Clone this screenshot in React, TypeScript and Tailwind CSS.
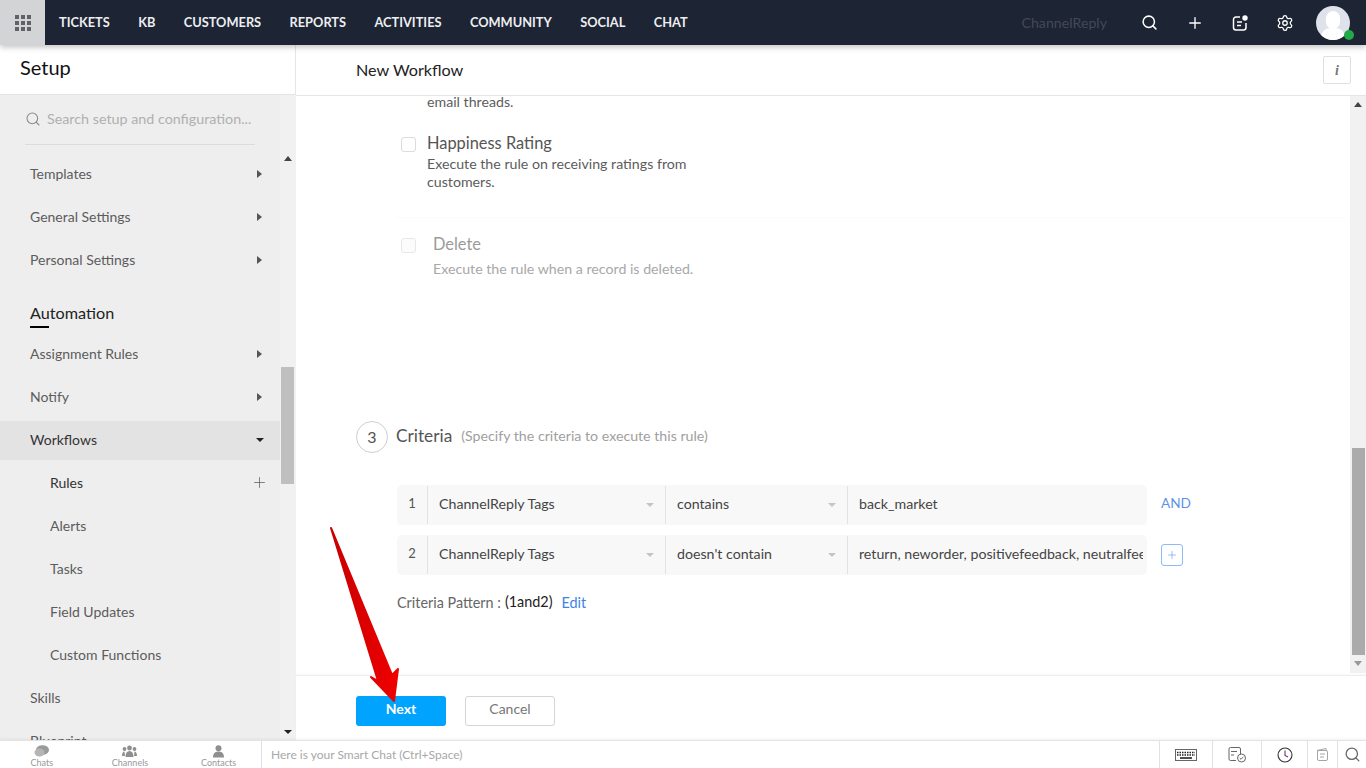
import React from 'react';
import { Plus, Search, Settings } from 'lucide-react';

const nav = ['TICKETS', 'KB', 'CUSTOMERS', 'REPORTS', 'ACTIVITIES', 'COMMUNITY', 'SOCIAL', 'CHAT'];

function Caret({ dir = 'right', className = '' }: { dir?: 'right' | 'down' | 'up'; className?: string }) {
  if (dir === 'right') {
    return <span className={`block w-0 h-0 border-y-[4px] border-y-transparent border-l-[5px] border-l-[#555] ${className}`} />;
  }
  if (dir === 'up') {
    return <span className={`block w-0 h-0 border-x-[4px] border-x-transparent border-b-[5px] border-b-[#444] ${className}`} />;
  }
  return <span className={`block w-0 h-0 border-x-[4px] border-x-transparent border-t-[4px] border-t-[#222] ${className}`} />;
}

function SideRow({ label, caret = true }: { label: string; caret?: boolean }) {
  return (
    <div className="h-[43px] shrink-0 flex items-center justify-between pl-[30px] pr-[18px] text-[14px] text-[#5c5c5c]">
      <span>{label}</span>
      {caret && <Caret />}
    </div>
  );
}

function SubRow({ label }: { label: string }) {
  return <div className="h-[43px] shrink-0 flex items-center pl-[50px] text-[14px] text-[#5c5c5c]">{label}</div>;
}

function CriteriaRow({ n, op, value }: { n: number; op: string; value: string }) {
  return (
    <div className="w-[750px] h-[40px] rounded-[5px] bg-[#f8f8f8] flex items-center text-[14.2px] text-[#444]">
      <span className="w-[30px] pb-[3px] text-center text-[#555] text-[13px]">{n}</span>
      <div className="w-[238px] h-[38px] border-l border-[#e2e2e2] px-[11px] pb-[2px] flex items-center justify-between">
        <span>ChannelReply Tags</span>
        <span className="block w-0 h-0 mt-[2px] border-x-[4px] border-x-transparent border-t-[4px] border-t-[#c4c4c4]" />
      </div>
      <div className="w-[182px] h-[38px] border-l border-[#e2e2e2] px-[11px] pb-[2px] flex items-center justify-between">
        <span>{op}</span>
        <span className="block w-0 h-0 mt-[2px] border-x-[4px] border-x-transparent border-t-[4px] border-t-[#c4c4c4]" />
      </div>
      <div className="w-[296px] h-[38px] border-l border-[#e2e2e2] pl-[11px] pb-[2px] flex items-center whitespace-nowrap">
        <span className="block w-[284px] overflow-hidden">{value}</span>
      </div>
    </div>
  );
}

export default function App() {
  return (
    <div className="relative w-[1366px] h-[768px] overflow-hidden bg-white flex flex-col font-['Lato','Open_Sans',sans-serif]">
      {/* top bar */}
      <header className="h-[45px] shrink-0 bg-[#1d2433] flex items-center shadow-[0_2px_6px_rgba(0,0,0,0.25)] z-10">
        <div className="w-[45px] h-[45px] bg-[#d2d4d6] flex items-center justify-center">
          <div className="grid grid-cols-3 gap-[2px]">
            {Array.from({ length: 9 }).map((_, i) => (
              <span key={i} className="w-[4px] h-[4px] bg-[#5f6368]" />
            ))}
          </div>
        </div>
        <nav className="flex ml-[14px] gap-[28.4px] text-[12.8px] font-bold text-[#eceef1]">
          {nav.map(n => (
            <span key={n}>{n}</span>
          ))}
        </nav>
        <span className="ml-auto text-[14.2px] text-[#424958]">ChannelReply</span>
        <Search size={17} strokeWidth={2.2} className="ml-[34px] text-white" />
        <Plus size={18} strokeWidth={1.8} className="ml-[28px] text-white" />
        <svg width="18" height="18" viewBox="0 0 18 18" fill="none" className="ml-[27px] text-white">
          <path d="M9 3H5a2.5 2.5 0 0 0-2.5 2.5v8A2.5 2.5 0 0 0 5 16h7.5a2.5 2.5 0 0 0 2.5-2.5V9" stroke="currentColor" strokeWidth="1.5" />
          <path d="M6 8h5M6 11.5h4" stroke="currentColor" strokeWidth="1.5" />
          <circle cx="14" cy="4" r="2.7" fill="currentColor" />
        </svg>
        <Settings size={18} strokeWidth={1.7} className="ml-[27px] text-white" />
        <div className="relative ml-[22px] mr-[16px] w-[34px] h-[34px] rounded-full bg-[#dfe2ea] overflow-hidden">
          <span className="absolute left-[10px] top-[5px] w-[14px] h-[18px] rounded-full bg-white" />
          <span className="absolute left-[5px] top-[22px] w-[24px] h-[14px] rounded-t-[9px] bg-white" />
        </div>
        <span className="absolute left-[1344px] top-[30px] w-[10px] h-[10px] rounded-full bg-[#22a94a]" />
      </header>

      <div className="flex-1 min-h-0 flex">
        {/* setup sidebar */}
        <aside className="w-[296px] shrink-0 border-r border-[#e6e6e6] flex flex-col">
          <div className="h-[50px] shrink-0 bg-white pl-[20px] pt-[7px] text-[20px] leading-[30px] text-[#111] border-b border-[#e4e4e4]">Setup</div>
          <div className="flex-1 min-h-0 bg-[#eeeeee] flex">
            <div className="w-[280px] shrink-0 flex flex-col overflow-hidden">
              <div className="h-[50px] shrink-0 mx-[25px] pb-[2px] flex items-center gap-[6px] border-b border-[#dcdcdc] mb-[7px]">
                <Search size={16} strokeWidth={1.6} className="text-[#8a8a8a]" />
                <span className="text-[14.3px] text-[#b0b0b0] whitespace-nowrap">Search setup and configuration...</span>
              </div>
              <SideRow label="Templates" />
              <SideRow label="General Settings" />
              <SideRow label="Personal Settings" />
              <div className="h-[41px] shrink-0 mt-[10px] pl-[30px] pt-[12px]">
                <div className="relative w-fit text-[16.2px] leading-[20px] text-[#222]">
                  Automation
                  <span className="absolute left-0 top-[23px] w-[19px] h-[2px] bg-black" />
                </div>
              </div>
              <SideRow label="Assignment Rules" />
              <SideRow label="Notify" />
              <div className="h-[39px] shrink-0 mt-[3px] mb-[1px] pb-[2px] bg-[#e3e3e3] flex items-center justify-between pl-[30px] pr-[16px] text-[14px] text-[#333]">
                <span>Workflows</span>
                <Caret dir="down" />
              </div>
              <div className="h-[43px] shrink-0 flex items-center justify-between pl-[50px] pr-[12px] text-[14px] text-[#333]">
                <span>Rules</span>
                <Plus size={17} strokeWidth={1} className="text-[#555]" />
              </div>
              <SubRow label="Alerts" />
              <SubRow label="Tasks" />
              <SubRow label="Field Updates" />
              <SubRow label="Custom Functions" />
              <SideRow label="Skills" caret={false} />
              <SideRow label="Blueprint" caret={false} />
            </div>
            <div className="w-[16px] shrink-0 bg-[#f1f1f1] flex flex-col items-start pl-[1px] pt-[61px]">
              <Caret dir="up" className="ml-[3px]" />
              <div className="w-[13px] h-[117px] bg-[#bfbfbf] mt-[206px]" />
              <div className="mt-auto mb-[6px] ml-[3px]">
                <Caret dir="down" />
              </div>
            </div>
          </div>
        </aside>

        {/* main */}
        <main className="flex-1 min-w-0 flex flex-col">
          <div className="h-[51px] shrink-0 border-b border-[#e6e6e6] flex items-center justify-between pl-[60px] pr-[15px] bg-white z-[1]">
            <span className="text-[16.2px] text-[#222]">New Workflow</span>
            <div className="w-[28px] h-[28px] border border-[#e0e0e0] rounded-[2px] flex items-center justify-center font-['Liberation_Serif',serif] italic font-bold text-[14px] text-[#777]">i</div>
          </div>
          <div className="h-[577px] shrink-0 flex">
            <div className="flex-1 min-w-0 overflow-hidden">
              <div className="pl-[131px] text-[14.2px] leading-[12px] text-[#5c5c5c]">email threads.</div>
              <div className="flex pl-[105px] mt-[24px]">
                <span className="w-[15px] h-[15px] mt-[5px] border border-[#dcdcdc] rounded-[3px] bg-white" />
                <div className="ml-[11px]">
                  <div className="text-[16.4px] leading-[22px] text-[#555]">Happiness Rating</div>
                  <div className="w-[290px] mt-[1px] text-[14.2px] leading-[18px] text-[#5c5c5c]">Execute the rule on receiving ratings from customers.</div>
                </div>
              </div>
              <div className="h-px w-[950px] ml-[100px] mt-[26px] bg-[#fbfbfb]" />
              <div className="flex pl-[105px] mt-[15px]">
                <span className="w-[15px] h-[15px] mt-[5px] border border-[#e8e8e8] rounded-[3px] bg-[#fcfcfc]" />
                <div className="ml-[17px]">
                  <div className="text-[16.4px] leading-[22px] text-[#9a9a9a]">Delete</div>
                  <div className="mt-[5px] text-[14.2px] leading-[18px] text-[#a8a8a8]">Execute the rule when a record is deleted.</div>
                </div>
              </div>
              <div className="flex items-center pl-[60px] mt-[143px]">
                <span className="w-[32px] h-[32px] rounded-full border border-[#cfcfcf] flex items-center justify-center text-[16px] text-[#555]">3</span>
                <span className="ml-[8px] text-[17.3px] text-[#555] -mt-[2px]">Criteria</span>
                <span className="ml-[9px] text-[14.2px] text-[#a0a0a0] -mt-[2px]">(Specify the criteria to execute this rule)</span>
              </div>
              <div className="pl-[101px] mt-[32px] flex flex-col gap-[10px]">
                <div className="flex items-center">
                  <CriteriaRow n={1} op="contains" value="back_market" />
                  <span className="ml-[14px] text-[13.6px] text-[#5b93e8] -mt-[3px]">AND</span>
                </div>
                <div className="flex items-center">
                  <CriteriaRow n={2} op="doesn't contain" value="return, neworder, positivefeedback, neutralfeedback" />
                  <span className="ml-[14px] w-[22px] h-[22px] rounded-[3px] border border-[#8cbcf5] flex items-center justify-center">
                    <Plus size={12} strokeWidth={1.2} className="text-[#5b93e8]" />
                  </span>
                </div>
              </div>
              <div className="pl-[101px] mt-[17px] flex items-center text-[14.4px] leading-[20px]">
                <span className="text-[#666]">Criteria Pattern :</span>
                <span className="ml-[4px] text-[#222] -mt-[1px]">(1and2)</span>
                <span className="ml-[9px] text-[#3f83e6] mt-[1px]">Edit</span>
              </div>
            </div>
            <div className="w-[16px] shrink-0 bg-[#f1f1f1] flex flex-col items-center pt-[6px]">
              <Caret dir="up" />
              <div className="w-[13px] h-[207px] bg-[#ababab] mt-[341px]" />
              <div className="mt-[6px]">
                <span className="block w-0 h-0 border-x-[4px] border-x-transparent border-t-[5px] border-t-[#999]" />
              </div>
            </div>
          </div>
          <div className="flex-1 min-h-0 mt-[2px] border-t border-[#eeeeee] shadow-[0_-1px_2px_rgba(0,0,0,0.03)] flex items-start pl-[60px] pt-[20px] gap-[19px]">
            <button className="w-[90px] h-[30px] pb-[5px] rounded-[3px] bg-[#00a3fe] text-white text-[14px] font-bold">Next</button>
            <button className="w-[90px] h-[30px] pb-[5px] rounded-[3px] border border-[#d4d4d4] text-[#777] text-[14px]">Cancel</button>
          </div>
        </main>
      </div>

      {/* smart chat bar */}
      <footer className="h-[28px] shrink-0 bg-white border-t border-[#e4e4e4] shadow-[0_-1px_3px_rgba(0,0,0,0.06)] flex items-stretch z-10">
        <div className="w-[262px] shrink-0 border-r border-[#dfdfdf] flex text-[9px] text-[#999]">
          <div className="w-[84px] flex flex-col items-center">
            <svg width="15" height="13" viewBox="0 0 15 13" className="text-[#9a9a9a] mt-[4px]" fill="currentColor">
              <ellipse cx="8.5" cy="5" rx="6.5" ry="4.8" />
              <ellipse cx="5.5" cy="7.5" rx="5" ry="4" fill="#b5b5b5" />
            </svg>
            <span className="leading-[9px]">Chats</span>
          </div>
          <div className="w-[93px] flex flex-col items-center">
            <svg width="15" height="13" viewBox="0 0 15 13" className="text-[#8f8f8f] mt-[4px]" fill="currentColor">
              <circle cx="7.5" cy="3" r="2.4" />
              <circle cx="2.5" cy="4" r="1.9" />
              <circle cx="12.5" cy="4" r="1.9" />
              <path d="M3.5 12c0-4 1.5-6 4-6s4 2 4 6zM0 11c0-3 1-4.5 2.5-4.5L3 11zM15 11c0-3-1-4.5-2.5-4.5L12 11z" />
            </svg>
            <span className="leading-[9px]">Channels</span>
          </div>
          <div className="w-[85px] flex flex-col items-center">
            <svg width="13" height="13" viewBox="0 0 13 13" className="text-[#8f8f8f] mt-[4px]" fill="currentColor">
              <circle cx="6.5" cy="3.2" r="3" />
              <path d="M1 12.5c0-4 2-6 5.5-6s5.5 2 5.5 6z" />
            </svg>
            <span className="leading-[9px]">Contacts</span>
          </div>
        </div>
        <div className="flex-1 pl-[9px] flex items-center text-[12px] text-[#a8a8a8]">Here is your Smart Chat (Ctrl+Space)</div>
        <div className="w-[53px] border-l border-[#dfe3e8] flex items-center justify-center">
          <svg width="22" height="12" viewBox="0 0 22 12">
            <rect x="0.5" y="0.5" width="21" height="11" fill="#fff" stroke="#666" />
            <path d="M2 3.5h18M2 6h18" stroke="#222" strokeWidth="1.6" strokeDasharray="1.5 1" />
            <path d="M5 9h12" stroke="#222" strokeWidth="1.6" />
          </svg>
        </div>
        <div className="w-[49px] border-l border-[#dfe3e8] flex items-center justify-center">
          <svg width="19" height="16" viewBox="0 0 19 16" fill="none" stroke="#666" strokeWidth="1">
            <path d="M12.5 7V2A1.5 1.5 0 0 0 11 .5H2.5A1.5 1.5 0 0 0 1 2v10a1.5 1.5 0 0 0 1.5 1.5H8" />
            <path d="M3 4.5h6M3 8h3" />
            <circle cx="13.5" cy="11" r="4" />
            <path d="M11.7 11l1.3 1.3 2.3-2.5" />
          </svg>
        </div>
        <div className="w-[46px] border-l border-[#dfe3e8] flex items-center justify-center">
          <svg width="16" height="16" viewBox="0 0 16 16" fill="none" stroke="#333" strokeWidth="1.1">
            <circle cx="8" cy="8" r="7" />
            <path d="M8 3.5V8.5l3 1.5" stroke="#70307a" />
          </svg>
        </div>
        <div className="w-[30px] border-l border-[#dfe3e8] flex items-center justify-center">
          <svg width="15" height="15" viewBox="0 0 15 15" fill="none" stroke="#a5a5a5" strokeWidth="1">
            <path d="M2 3.5l9-2 .5 2" />
            <rect x="2.5" y="3.5" width="10" height="10" rx="1.5" />
            <path d="M5 7h5M5 10h4" />
          </svg>
        </div>
        <div className="w-[29px] border-l border-[#dfe3e8] flex items-center justify-center">
          <Search size={17} strokeWidth={1.8} className="text-[#666]" />
        </div>
      </footer>

      {/* annotation arrow drawn over the screenshot */}
      <svg className="absolute left-[325px] top-[520px] pointer-events-none" width="85" height="190" viewBox="0 0 85 190">
        <defs>
          <linearGradient id="arrowFill" x1="0" y1="0" x2="1" y2="0">
            <stop offset="0" stopColor="#c80000" />
            <stop offset="1" stopColor="#f00000" />
          </linearGradient>
        </defs>
        <path d="M6 8 L53 161 L46 157 L69 181 L73 149 L67 155 Z" fill="url(#arrowFill)" stroke="url(#arrowFill)" strokeWidth="2" strokeLinejoin="round" />
      </svg>
    </div>
  );
}
